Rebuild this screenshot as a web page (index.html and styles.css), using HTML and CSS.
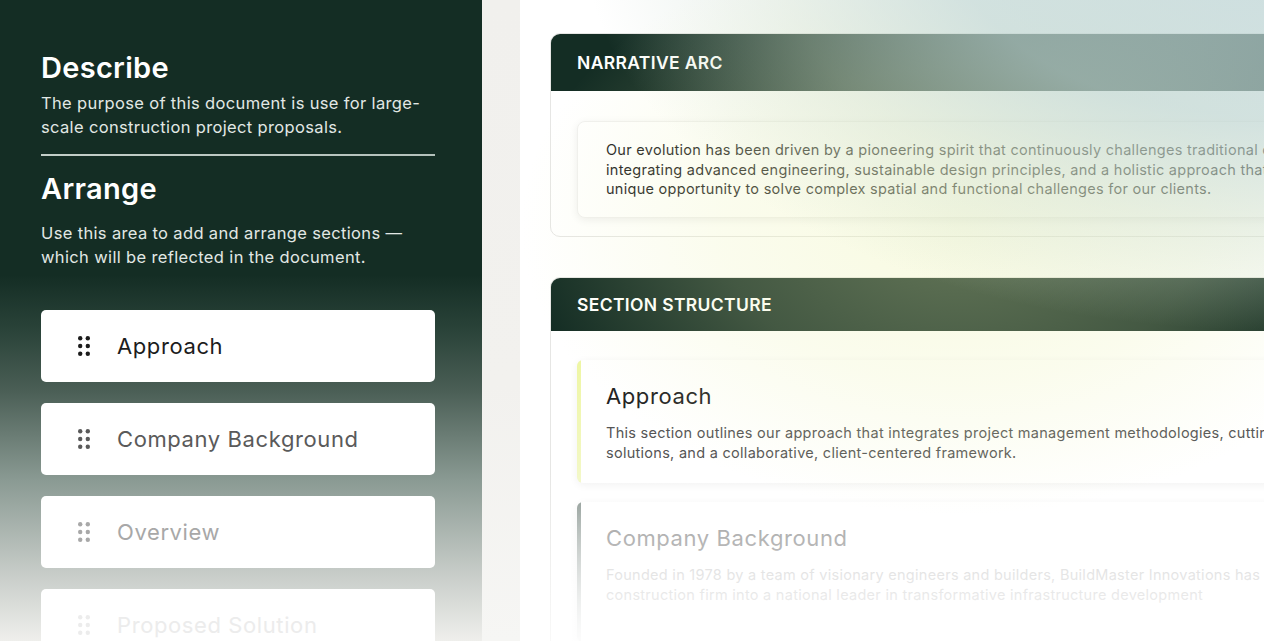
FILE: index.html
```html
<!DOCTYPE html>
<html lang="en">
<head>
<meta charset="utf-8">
<title>Document Builder</title>
<link rel="stylesheet" href="styles.css">
</head>
<body>
<div class="app">
  <aside class="sidebar">
    <h2 class="side-title">Describe</h2>
    <p class="side-text">The purpose of this document is use for large-<br>scale construction project proposals.</p>
    <hr class="side-divider">
    <h2 class="side-title">Arrange</h2>
    <p class="side-text side-text--arrange">Use this area to add and arrange sections —<br>which will be reflected in the document.</p>
    <ul class="section-list">
      <li class="section-item section-item--1">
        <svg class="grip" viewBox="0 0 12 20" width="12" height="20"><circle cx="2.2" cy="2.2" r="2.2"/><circle cx="9.8" cy="2.2" r="2.2"/><circle cx="2.2" cy="10" r="2.2"/><circle cx="9.8" cy="10" r="2.2"/><circle cx="2.2" cy="17.8" r="2.2"/><circle cx="9.8" cy="17.8" r="2.2"/></svg>
        <span>Approach</span>
      </li>
      <li class="section-item section-item--2">
        <svg class="grip" viewBox="0 0 12 20" width="12" height="20"><circle cx="2.2" cy="2.2" r="2.2"/><circle cx="9.8" cy="2.2" r="2.2"/><circle cx="2.2" cy="10" r="2.2"/><circle cx="9.8" cy="10" r="2.2"/><circle cx="2.2" cy="17.8" r="2.2"/><circle cx="9.8" cy="17.8" r="2.2"/></svg>
        <span>Company Background</span>
      </li>
      <li class="section-item section-item--3">
        <svg class="grip" viewBox="0 0 12 20" width="12" height="20"><circle cx="2.2" cy="2.2" r="2.2"/><circle cx="9.8" cy="2.2" r="2.2"/><circle cx="2.2" cy="10" r="2.2"/><circle cx="9.8" cy="10" r="2.2"/><circle cx="2.2" cy="17.8" r="2.2"/><circle cx="9.8" cy="17.8" r="2.2"/></svg>
        <span>Overview</span>
      </li>
      <li class="section-item section-item--4">
        <svg class="grip" viewBox="0 0 12 20" width="12" height="20"><circle cx="2.2" cy="2.2" r="2.2"/><circle cx="9.8" cy="2.2" r="2.2"/><circle cx="2.2" cy="10" r="2.2"/><circle cx="9.8" cy="10" r="2.2"/><circle cx="2.2" cy="17.8" r="2.2"/><circle cx="9.8" cy="17.8" r="2.2"/></svg>
        <span>Proposed Solution</span>
      </li>
    </ul>
  </aside>
  <div class="gutter"></div>
  <main class="main">
    <section class="doc-card doc-card--narrative">
      <header class="doc-card__head">NARRATIVE ARC</header>
      <div class="doc-card__body">
        <div class="narrative-box">
          <p class="narrative-text">Our evolution has been driven by a pioneering spirit that continuously challenges traditional construction paradigms,</p>
          <p class="narrative-text">integrating advanced engineering, sustainable design principles, and a holistic approach that views every project as a</p>
          <p class="narrative-text">unique opportunity to solve complex spatial and functional challenges for our clients.</p>
        </div>
      </div>
    </section>
    <section class="doc-card doc-card--structure">
      <header class="doc-card__head doc-card__head--short">SECTION STRUCTURE</header>
      <div class="doc-card__body doc-card__body--structure">
        <article class="struct-item struct-item--active">
          <h3 class="struct-title">Approach</h3>
          <p class="struct-text">This section outlines our approach that integrates project management methodologies, cutting-edge technological</p>
          <p class="struct-text struct-text--next">solutions, and a collaborative, client-centered framework.</p>
        </article>
        <article class="struct-item struct-item--muted">
          <h3 class="struct-title">Company Background</h3>
          <p class="struct-text">Founded in 1978 by a team of visionary engineers and builders, BuildMaster Innovations has transformed from a small local</p>
          <p class="struct-text struct-text--next">construction firm into a national leader in transformative infrastructure development</p>
        </article>
      </div>
    </section>
  </main>
</div>
</body>
</html>
```

FILE: styles.css
```css
* { box-sizing: border-box; }

html, body {
  margin: 0;
  padding: 0;
  height: 641px;
  overflow: hidden;
}

body {
  font-family: "Inter", "Noto Sans", sans-serif;
  color: #1c1c1c;
  background: #f1f0ed;
}

.app {
  display: flex;
  height: 641px;
  overflow: hidden;
  background: #f1f0ed;
}

/* ---------- Sidebar ---------- */
.sidebar {
  flex: none;
  width: 482px;
  padding: 50px 47px 0 41px;
  background: linear-gradient(to bottom,
    #142d24 0,
    #142d24 275px,
    #2a4339 330px,
    #4a5e55 390px,
    #8a9a93 480px,
    #c8cdc9 575px,
    #efefec 641px);
  color: #fff;
}

.side-title {
  margin: 0;
  font-size: 29px;
  line-height: 36px;
  font-weight: 600;
  letter-spacing: 0.3px;
  color: #ffffff;
}

.side-text {
  margin: 5px 0 0;
  font-size: 16.5px;
  line-height: 24px;
  letter-spacing: 0.35px;
  color: #e2e8e5;
}

.side-text--arrange {
  margin-top: 14px;
}

.side-divider {
  margin: 15px 0 15px;
  border: 0;
  height: 1.5px;
  background: linear-gradient(to right, #c3cec8, #b4c1bb);
}

.section-list {
  list-style: none;
  margin: 41px 0 0;
  padding: 0;
  display: flex;
  flex-direction: column;
  gap: 21px;
}

.section-item {
  display: flex;
  align-items: center;
  gap: 27px;
  height: 72px;
  flex: none;
  padding-left: 37px;
  background: #ffffff;
  border-radius: 5px;
  font-size: 22px;
  letter-spacing: 0.6px;
  font-weight: 400;
}

.grip { flex: none; }

.section-item--1 { color: #1c1c1c; fill: #1c1c1c; }
.section-item--2 { color: #5a5a5a; fill: #5a5a5a; }
.section-item--3 { color: #a8a8a8; fill: #a8a8a8; }
.section-item--4 { color: #ececec; fill: #ececec; }

/* ---------- Gutter ---------- */
.gutter {
  flex: none;
  width: 38px;
  background: linear-gradient(to bottom, #f1f0ed 0, #f2f1ee 60%, #f6f6f4 100%);
}

/* ---------- Main ---------- */
.main {
  position: relative;
  flex: 1;
  min-width: 0;
  padding: 33px 0 0 30px;
  background: #ffffff;
  overflow: hidden;
}

.main::after {
  content: "";
  position: absolute;
  inset: 0;
  pointer-events: none;
  background:
    linear-gradient(to bottom, rgba(255,255,255,0) 470px, rgba(255,255,255,0.75) 641px),
    radial-gradient(ellipse 680px 390px at 744px -60px,
      rgba(189,212,212,0.76) 0%,
      rgba(189,212,212,0.68) 45%,
      rgba(200,218,205,0.38) 72%,
      rgba(225,235,190,0) 100%),
    radial-gradient(ellipse 440px 290px at 440px 225px,
      rgba(236,242,175,0.38) 0%,
      rgba(236,242,175,0.22) 55%,
      rgba(236,242,175,0) 100%);
}

.doc-card {
  width: 900px;
  border: 1px solid #e6e6e4;
  border-radius: 10px;
  background: #ffffff;
  overflow: hidden;
}

.doc-card--structure {
  margin-top: 40px;
}

.doc-card__head {
  height: 57px;
  display: flex;
  align-items: center;
  padding-left: 26px;
  background: #142d24;
  color: #ffffff;
  font-size: 17.5px;
  font-weight: 600;
  letter-spacing: 0.35px;
}

.doc-card__head--short {
  height: 53px;
}

.doc-card__body {
  padding: 30px 0 18px 26px;
}

.doc-card__body--structure {
  padding: 29px 0 30px 26px;
  display: flex;
  flex-direction: column;
  gap: 19px;
}

.narrative-box {
  width: 860px;
  padding: 18px 28px;
  border: 1px solid #f0f0ef;
  border-radius: 8px;
  background: #ffffff;
  box-shadow: 0 2px 8px rgba(0, 0, 0, 0.07);
}

.narrative-text {
  margin: 0;
  font-size: 14.5px;
  line-height: 19.5px;
  letter-spacing: 0.28px;
  color: #1c1c1c;
  white-space: nowrap;
}

.struct-item {
  width: 860px;
  padding: 20px 28px 20px 29px;
  border-radius: 6px;
  box-shadow: 0 2px 8px rgba(0, 0, 0, 0.06);
}

.struct-item--active {
  background: linear-gradient(to bottom, #eef6a4, #f3f8c8) left top / 4px 100% no-repeat, #ffffff;
}

.struct-item--muted {
  background: linear-gradient(to bottom, #8b9792, #d6dad8 70%, #f2f2f2) left top / 4px 100% no-repeat, #ffffff;
  height: 140px;
}

.struct-title {
  margin: 0;
  font-size: 22px;
  line-height: 33px;
  letter-spacing: 0.6px;
  font-weight: 400;
  color: #222222;
}

.struct-text {
  margin: 10px 0 0;
  font-size: 14.5px;
  line-height: 20px;
  letter-spacing: 0.28px;
  color: #555555;
  white-space: nowrap;
}

.struct-text--next {
  margin-top: 0;
}

.struct-item--muted .struct-title { color: #949494; }
.struct-item--muted .struct-text { color: #cfcfcf; }
```
